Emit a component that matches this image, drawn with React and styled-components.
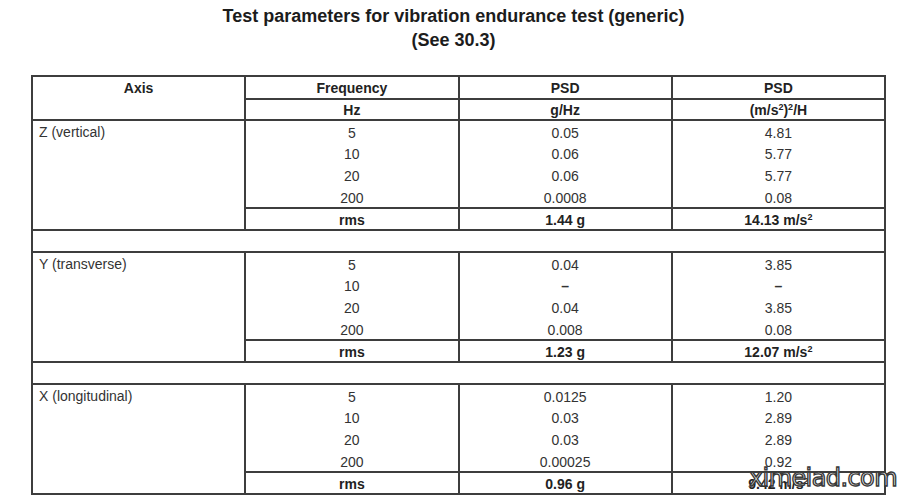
import styled, { createGlobalStyle } from 'styled-components'

const sections = [
    {
        axis: 'Z (vertical)',
        rows: [
            ['5', '0.05', '4.81'],
            ['10', '0.06', '5.77'],
            ['20', '0.06', '5.77'],
            ['200', '0.0008', '0.08'],
        ],
        rms: ['1.44 g', '14.13'],
    },
    {
        axis: 'Y (transverse)',
        rows: [
            ['5', '0.04', '3.85'],
            ['10', '–', '–'],
            ['20', '0.04', '3.85'],
            ['200', '0.008', '0.08'],
        ],
        rms: ['1.23 g', '12.07'],
    },
    {
        axis: 'X (longitudinal)',
        rows: [
            ['5', '0.0125', '1.20'],
            ['10', '0.03', '2.89'],
            ['20', '0.03', '2.89'],
            ['200', '0.00025', '0.92'],
        ],
        rms: ['0.96 g', '9.42'],
    },
]

const App = () => {
    return (
        <Page>
            <GlobalStyle />
            <TableNo>Table 9</TableNo>
            <Title>Test parameters for vibration endurance test (generic)</Title>
            <Title>(See 30.3)</Title>
            <Grid>
                <thead>
                    <HeadRow $h={23}>
                        <HeadCell rowSpan={2} $top>Axis</HeadCell>
                        <HeadCell>Frequency</HeadCell>
                        <HeadCell>PSD</HeadCell>
                        <HeadCell>PSD</HeadCell>
                    </HeadRow>
                    <HeadRow $h={21}>
                        <HeadCell>Hz</HeadCell>
                        <HeadCell>g/Hz</HeadCell>
                        <HeadCell>
                            (m/s<sup>2</sup>)<sup>2</sup>/H
                        </HeadCell>
                    </HeadRow>
                </thead>
                <tbody>
                    {sections.map((s, si) => [
                        ...s.rows.map((r, ri) => (
                            <Row key={`${si}-${ri}`}>
                                {ri === 0 && <AxisCell rowSpan={5}>{s.axis}</AxisCell>}
                                {r.map((v, ci) => (
                                    <Cell key={ci} $first={ri === 0} $dash={v === '–'}>
                                        {v}
                                    </Cell>
                                ))}
                            </Row>
                        )),
                        <Row key={`${si}-rms`}>
                            <Cell $rule $bold>rms</Cell>
                            <Cell $rule $bold>{s.rms[0]}</Cell>
                            <Cell $rule $bold>
                                {s.rms[1]} m/s<sup>2</sup>
                            </Cell>
                        </Row>,
                        si < sections.length - 1 && (
                            <Row key={`${si}-gap`}>
                                <GapCell colSpan={4} />
                            </Row>
                        ),
                    ])}
                </tbody>
            </Grid>
            <Watermark>ximeiad.com</Watermark>
        </Page>
    )
}

const GlobalStyle = createGlobalStyle`
    html, body {
        margin: 0;
        padding: 0;
        background: #ffffff;
    }
    body {
        font-family: "Liberation Sans", Arial, sans-serif;
        overflow: hidden;
    }
`

const line = '2px solid #3d3d3d'

const Page = styled.div`
    position: relative;
    width: 907px;
    height: 501px;
    overflow: hidden;
    background: #fff;
`

const TableNo = styled.div`
    margin-top: -14px;
    height: 18px;
    line-height: 18px;
    text-align: center;
    font-size: 16px;
    font-weight: bold;
    color: #8a8a8a;
`

const Title = styled.div`
    height: 24px;
    line-height: 24px;
    text-align: center;
    font-size: 18px;
    font-weight: bold;
    color: #1c1c1c;
`

const Grid = styled.table`
    margin: 23px 0 0 31px;
    width: 855px;
    table-layout: fixed;
    border-collapse: collapse;
    border: ${line};
    font-size: 14px;
    color: #333;

    sup {
        font-size: 9px;
        line-height: 0;
        vertical-align: 5px;
    }
`

const HeadRow = styled.tr`
    height: ${p => p.$h}px;
`

const HeadCell = styled.th`
    padding: 0;
    line-height: 18px;
    text-align: center;
    font-weight: bold;
    color: #222;
    border-left: ${line};
    border-right: ${line};
    border-bottom: ${p => (p.$top ? line : 'none')};
    border-top: ${line};
    vertical-align: ${p => (p.$top ? 'top' : 'middle')};
    padding-top: ${p => (p.$top ? '2px' : '0')};
`

const Row = styled.tr`
    height: 22px;
`

const AxisCell = styled.td`
    padding: 2px 0 0 6px;
    line-height: 18px;
    vertical-align: top;
    text-align: left;
    border: ${line};
`

const Cell = styled.td`
    padding: 2px 0 0;
    line-height: 18px;
    text-align: center;
    font-weight: ${p => (p.$bold || p.$dash ? 'bold' : 'normal')};
    color: ${p => (p.$bold ? '#222' : '#333')};
    border-left: ${line};
    border-right: ${line};
    border-top: ${p => (p.$first || p.$rule ? line : 'none')};
`

const GapCell = styled.td`
    height: 20px;
    padding: 0;
    border: ${line};
`

const Watermark = styled.div`
    position: absolute;
    left: 749px;
    top: 463px;
    font-family: "DejaVu Sans", "Liberation Sans", sans-serif;
    font-size: 24px;
    letter-spacing: -0.6px;
    color: #ffffff;
    -webkit-text-stroke: 1.4px #3a3a3a;
    line-height: 30px;
`

export default App
